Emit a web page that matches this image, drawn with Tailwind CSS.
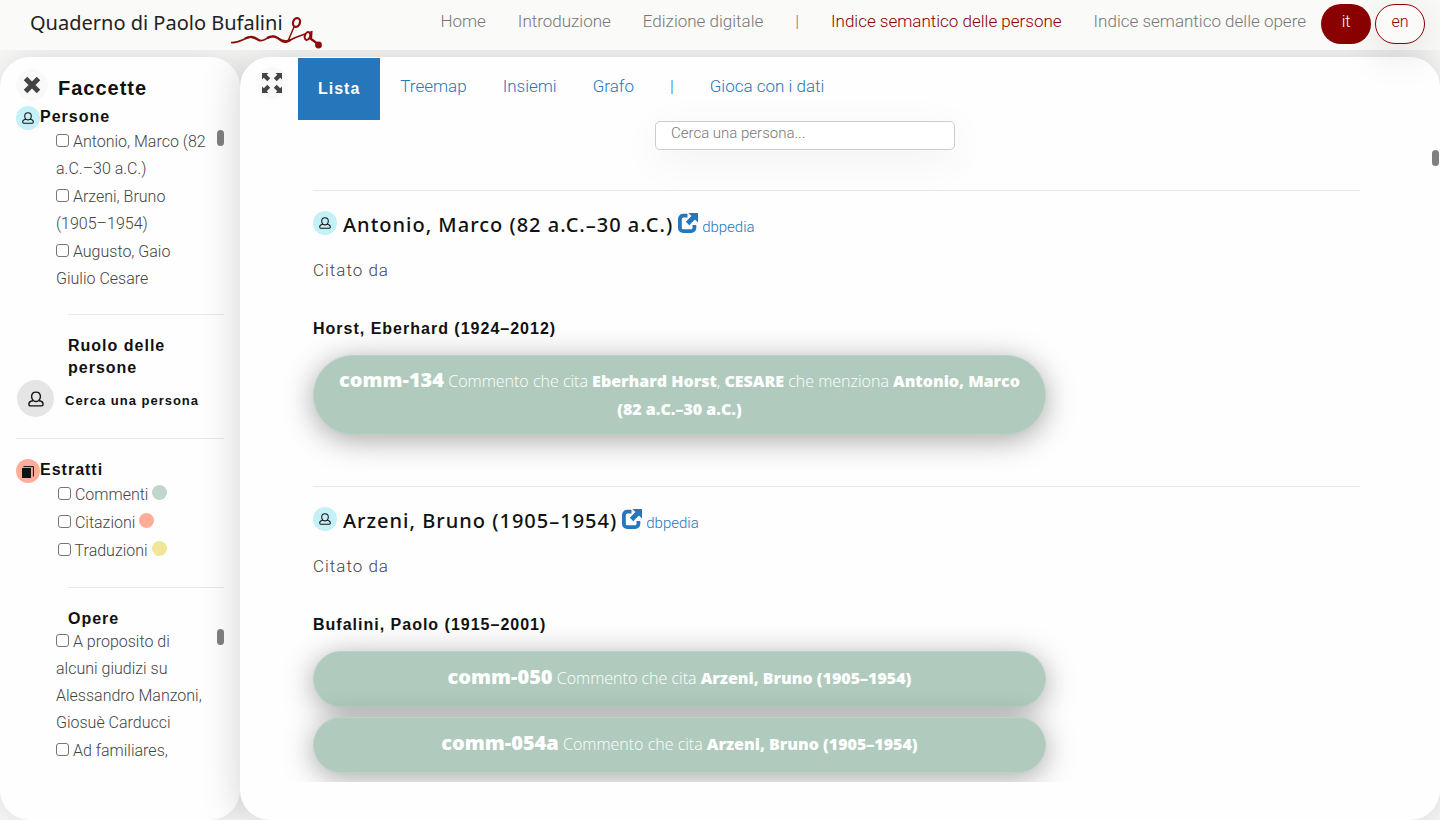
<!DOCTYPE html>
<html lang="it">
<head>
<meta charset="utf-8">
<meta name="viewport" content="width=device-width, initial-scale=1">
<title>Quaderno di Paolo Bufalini</title>
<script src="https://cdn.jsdelivr.net/npm/@tailwindcss/browser@4"></script>
</head>
<body class="flex h-screen flex-col overflow-hidden bg-[#fafaf8] font-['Roboto',sans-serif] text-base font-light text-[#444]">

<svg class="hidden" aria-hidden="true">
  <symbol id="person" viewBox="0 0 16 16">
    <path d="M5.300 9.500C4.200 8.600 3.600 7.300 3.600 5.600C3.600 3 5.400 1.100 8 1.100S12.400 3 12.400 5.600C12.400 7.300 11.800 8.600 10.700 9.500C9.100 10.700 6.900 10.700 5.300 9.500ZM5 9.700C2.400 10.100 .9 11 .9 13C.9 14.300 1.300 14.900 2.500 14.900H13.500C14.700 14.900 15.100 14.300 15.100 13C15.100 11 13.600 10.100 11 9.700" fill="none" stroke="currentColor" stroke-width="1.400" stroke-linejoin="round"/>
  </symbol>
  <symbol id="external" viewBox="0 0 20 20">
    <path d="M9.500 2.700H5.200A3.200 3.200 0 0 0 1.900 5.900V14.900A3.200 3.200 0 0 0 5.100 18.100H13.200A3.200 3.200 0 0 0 16.400 14.900V12" fill="none" stroke="currentColor" stroke-width="3.800"/>
    <path d="M10.500 0H20V9.500L16.900 6.600L11.300 12.200L7.800 8.700L13.400 3.100Z" fill="currentColor"/>
  </symbol>
</svg>

<header class="relative z-10 flex h-[50px] shrink-0 items-start justify-between bg-[#fafaf8] pr-[15px] pl-[30px]">
  <a href="#" class="relative block pt-2.5 font-['Noto_Sans',sans-serif] text-[20px] leading-[26px] font-normal whitespace-nowrap text-[#222]">Quaderno di Paolo Bufalini
    <svg class="absolute top-4 left-[200px] h-[34px] w-[94px] text-[#8b0a0a]" viewBox="0 0 94 34" fill="none" stroke="currentColor" aria-hidden="true">
      <path d="M1 26.500C8 27.500 13 23 19 21.500S27 25.500 32 24.500S39 20 44 20.500S51 26.500 58 24.500" stroke-width="1.600"/>
      <path d="M15 22.500C21 19.500 25 21 30 25M37 22C43 18.500 47 21 51 24.500S57 25 61 24" stroke-width="2.200"/>
      <path d="M58 25L64 11M58 25C64 22 69 20 75 18M81 23L88 28" stroke-width="1.500"/>
      <ellipse cx="66.500" cy="6.500" rx="3.400" ry="4.500" transform="rotate(20 66.500 6.500)" stroke-width="2.200"/>
      <ellipse cx="77.500" cy="20" rx="2.700" ry="4" transform="rotate(20 77.500 20)" stroke-width="2"/>
      <path d="M81.500 15L81 23L88 28" stroke-width="2.200"/>
      <circle cx="88.500" cy="29" r="3.400" fill="currentColor" stroke="none"/>
    </svg>
  </a>
  <nav class="flex items-start text-[17px] leading-[22px] whitespace-nowrap text-[#777]">
    <div class="flex gap-8 pt-2.5 pr-[15px]">
      <a href="#">Home</a>
      <a href="#">Introduzione</a>
      <a href="#">Edizione digitale</a>
      <span>|</span>
      <a href="#" class="text-[#8b0000]">Indice semantico delle persone</a>
      <a href="#">Indice semantico delle opere</a>
    </div>
    <div class="flex gap-1 pt-1 text-base">
      <button class="h-10 w-[50px] rounded-[20px] bg-[#8b0000] pb-1 text-white">it</button>
      <button class="h-10 w-[50px] rounded-[20px] border border-[#8b0000] bg-[#fafaf8] pb-1 text-[#8b0000] shadow-[0_10px_40px_rgba(0,0,0,0.12)]">en</button>
    </div>
  </nav>
</header>

<div class="flex min-h-0 flex-1 pt-[7px]">
  <aside class="relative w-60 shrink-0 rounded-[30px] bg-[#fefefe] px-4 pt-3 shadow-[0_0_40px_rgba(0,0,0,0.15)]">
    <div class="flex items-center gap-2.5">
      <button aria-label="Chiudi" class="grid size-8 place-items-center rounded-full bg-[#f9f9f9] text-[#444]">
        <svg class="size-[18px]" viewBox="0 0 18 18" stroke="currentColor" stroke-width="5" aria-hidden="true"><path d="M2.500 2.500L15.500 15.500M15.500 2.500L2.500 15.500"/></svg>
      </button>
      <h2 class="pt-1.5 font-['Liberation_Sans',sans-serif] text-[20px] leading-[26px] font-bold tracking-[1px] text-[#111]">Faccette</h2>
    </div>
    <section class="pt-[5px]">
      <div class="flex h-[22px] items-start">
        <span class="grid size-6 place-items-center rounded-full bg-[#c4f0f8] text-[#111]"><svg class="size-3"><use href="#person"/></svg></span>
        <h3 class="font-['Liberation_Sans',sans-serif] text-base leading-[22px] font-bold tracking-[1px] text-[#111]">Persone</h3>
      </div>
      <div class="relative ml-10 h-[166px] overflow-hidden pr-3 text-base leading-[27px]">
        <label class="mb-px block"><input type="checkbox" class="size-[13px] appearance-none rounded-[3px] border border-[#767676] bg-white"> Antonio, Marco (82 a.C.–30 a.C.)</label>
        <label class="mb-px block"><input type="checkbox" class="size-[13px] appearance-none rounded-[3px] border border-[#767676] bg-white"> Arzeni, Bruno<br>(1905–1954)</label>
        <label class="mb-px block"><input type="checkbox" class="size-[13px] appearance-none rounded-[3px] border border-[#767676] bg-white"> Augusto, Gaio Giulio Cesare</label>
        <div class="absolute top-0.5 right-0 h-4 w-[7px] rounded-full bg-[#808080]"></div>
      </div>
      <div class="mt-5 ml-[52px] border-t border-[#e8e8e8] pt-5">
        <h3 class="font-['Liberation_Sans',sans-serif] text-base leading-[22px] font-bold tracking-[1px] text-[#111]">Ruolo delle persone</h3>
      </div>
      <button class="mt-px ml-px flex items-center gap-[11px]">
        <span class="grid size-[37px] place-items-center rounded-full bg-[#e5e5e5] text-[#111]"><svg class="size-4"><use href="#person"/></svg></span>
        <span class="pt-1 font-['Liberation_Sans',sans-serif] text-[13px] leading-5 font-bold tracking-[1px] text-[#111]">Cerca una persona</span>
      </button>
    </section>
    <section class="mt-[21px] border-t border-[#e8e8e8] pt-5">
      <div class="flex h-[22px] items-start">
        <span class="grid size-6 place-items-center rounded-full bg-[#ffad99] pt-px text-[#111]">
          <svg class="size-3" viewBox="0 0 12 12" aria-hidden="true"><path d="M0 2H9V12H0Z" fill="currentColor"/><path d="M1.500 .6H11.400V10.500" fill="none" stroke="currentColor" stroke-width="1"/></svg>
        </span>
        <h3 class="font-['Liberation_Sans',sans-serif] text-base leading-[22px] font-bold tracking-[1px] text-[#111]">Estratti</h3>
      </div>
      <div class="ml-[42px] text-base leading-7">
        <label class="block"><input type="checkbox" class="size-[13px] appearance-none rounded-[3px] border border-[#767676] bg-white"> Commenti <span class="inline-block size-[15px] rounded-full bg-[#c1d7cb]"></span></label>
        <label class="block"><input type="checkbox" class="size-[13px] appearance-none rounded-[3px] border border-[#767676] bg-white"> Citazioni <span class="inline-block size-[15px] rounded-full bg-[#ffad99]"></span></label>
        <label class="block"><input type="checkbox" class="size-[13px] appearance-none rounded-[3px] border border-[#767676] bg-white"> Traduzioni <span class="inline-block size-[15px] rounded-full bg-[#f0e696]"></span></label>
      </div>
      <div class="mt-[22px] ml-[52px] h-10 border-t border-[#e8e8e8] pt-5">
        <h3 class="font-['Liberation_Sans',sans-serif] text-base leading-[22px] font-bold tracking-[1px] text-[#111]">Opere</h3>
      </div>
      <div class="relative ml-10 overflow-hidden pt-px pr-3 text-base leading-[27px]">
        <label class="mb-px block"><input type="checkbox" class="size-[13px] appearance-none rounded-[3px] border border-[#767676] bg-white"> A proposito di alcuni giudizi su Alessandro Manzoni, Giosuè Carducci</label>
        <label class="block"><input type="checkbox" class="size-[13px] appearance-none rounded-[3px] border border-[#767676] bg-white"> Ad familiares,</label>
        <div class="absolute top-0.5 right-0 h-4 w-[7px] rounded-full bg-[#808080]"></div>
      </div>
    </section>
  </aside>

  <main class="relative flex min-w-0 flex-1 flex-col rounded-[30px] bg-[#fefefe] pb-[38px] shadow-[0_0_40px_rgba(0,0,0,0.18)]">
    <nav class="flex h-[64px] shrink-0 items-start pt-px pl-4 text-[17px] leading-[22px] text-[#2576bb]">
      <button aria-label="Schermo intero" class="mt-[9px] mr-2.5 grid size-8 place-items-center rounded-full bg-[#f9f9f9] text-[#444]">
        <svg class="size-5" viewBox="0 0 20 20" fill="currentColor" aria-hidden="true">
          <path id="arrow" d="M0 0H6.500L4.700 1.800L8.200 5.300L5.300 8.200L1.800 4.700L0 6.500Z"/>
          <use href="#arrow" transform="matrix(-1 0 0 1 20 0)"/><use href="#arrow" transform="matrix(1 0 0 -1 0 20)"/><use href="#arrow" transform="matrix(-1 0 0 -1 20 20)"/>
        </svg>
      </button>
      <a href="#" class="bg-[#2576bb] px-5 py-5 font-['Liberation_Sans',sans-serif] text-base leading-[22px] font-bold tracking-[1px] text-white">Lista</a>
      <div class="flex gap-9 pt-[17px] pl-5">
        <a href="#">Treemap</a>
        <a href="#">Insiemi</a>
        <a href="#">Grafo</a>
        <span>|</span>
        <a href="#">Gioca con i dati</a>
      </div>
    </nav>
    <div class="flex shrink-0 justify-center pr-[70px]">
      <input type="text" aria-label="Cerca una persona" placeholder="Cerca una persona..." class="h-[29px] w-[300px] rounded-[5px] border border-[#ccc] bg-white px-[15px] pb-1.5 text-[15px] font-light shadow-[0_10px_40px_rgba(0,0,0,0.06)] placeholder:text-[#777]">
    </div>
    <div class="absolute top-[93px] right-px h-4 w-[7px] rounded-full bg-[#808080]"></div>

    <div class="min-h-0 flex-1 overflow-hidden pt-10 pr-20 pl-[73px]">
      <article class="h-[296px] border-t border-[#e8e8e8] pt-5">
        <div class="flex items-start">
          <span class="mr-1.5 grid size-6 place-items-center rounded-full bg-[#c4f0f8] text-[#111]"><svg class="size-3"><use href="#person"/></svg></span>
          <h3 class="font-['Noto_Sans',sans-serif] text-[20px] leading-7 font-medium tracking-[1px] text-[#111]">Antonio, Marco (82 a.C.–30 a.C.)</h3>
          <a href="#" class="ml-[5px] flex gap-1 text-[15px] leading-8 text-[#2576bb]"><svg class="mt-0.5 size-5"><use href="#external"/></svg>dbpedia</a>
        </div>
        <p class="pt-4 text-[17px] leading-[22px] tracking-[1px]">Citato da</p>
        <h4 class="pt-[37px] font-['Liberation_Sans',sans-serif] text-base leading-[22px] font-bold tracking-[1px] text-[#111]">Horst, Eberhard (1924–2012)</h4>
        <a href="#" class="mt-[15px] block w-[70%] rounded-[40px] border border-[#b8d4c6] bg-[#b0cbbe] px-4 pt-2.5 pb-[11px] text-center font-['Open_Sans',sans-serif] leading-7 font-[350] text-white shadow-[0_5px_30px_rgba(0,0,0,0.35)]"><b class="text-[20px] font-extrabold">comm-134</b> Commento che cita <b class="font-extrabold">Eberhard Horst</b>, <b class="font-extrabold">CESARE</b> che menziona <b class="font-extrabold">Antonio, Marco (82 a.C.–30 a.C.)</b></a>
      </article>
      <article class="border-t border-[#e8e8e8] pt-5">
        <div class="flex items-start">
          <span class="mr-1.5 grid size-6 place-items-center rounded-full bg-[#c4f0f8] text-[#111]"><svg class="size-3"><use href="#person"/></svg></span>
          <h3 class="font-['Noto_Sans',sans-serif] text-[20px] leading-7 font-medium tracking-[1px] text-[#111]">Arzeni, Bruno (1905–1954)</h3>
          <a href="#" class="ml-[5px] flex gap-1 text-[15px] leading-8 text-[#2576bb]"><svg class="mt-0.5 size-5"><use href="#external"/></svg>dbpedia</a>
        </div>
        <p class="pt-4 text-[17px] leading-[22px] tracking-[1px]">Citato da</p>
        <h4 class="pt-[37px] font-['Liberation_Sans',sans-serif] text-base leading-[22px] font-bold tracking-[1px] text-[#111]">Bufalini, Paolo (1915–2001)</h4>
        <a href="#" class="mt-[15px] block w-[70%] rounded-[40px] border border-[#b8d4c6] bg-[#b0cbbe] px-4 pt-[11px] pb-[14px] text-center font-['Open_Sans',sans-serif] leading-7 font-[350] text-white shadow-[0_5px_30px_rgba(0,0,0,0.35)]"><b class="text-[20px] font-extrabold">comm-050</b> Commento che cita <b class="font-extrabold">Arzeni, Bruno (1905–1954)</b></a>
        <a href="#" class="mt-2.5 block w-[70%] rounded-[40px] border border-[#b8d4c6] bg-[#b0cbbe] px-4 pt-[11px] pb-[14px] text-center font-['Open_Sans',sans-serif] leading-7 font-[350] text-white shadow-[0_5px_30px_rgba(0,0,0,0.35)]"><b class="text-[20px] font-extrabold">comm-054a</b> Commento che cita <b class="font-extrabold">Arzeni, Bruno (1905–1954)</b></a>
      </article>
    </div>
  </main>
</div>
</body>
</html>
